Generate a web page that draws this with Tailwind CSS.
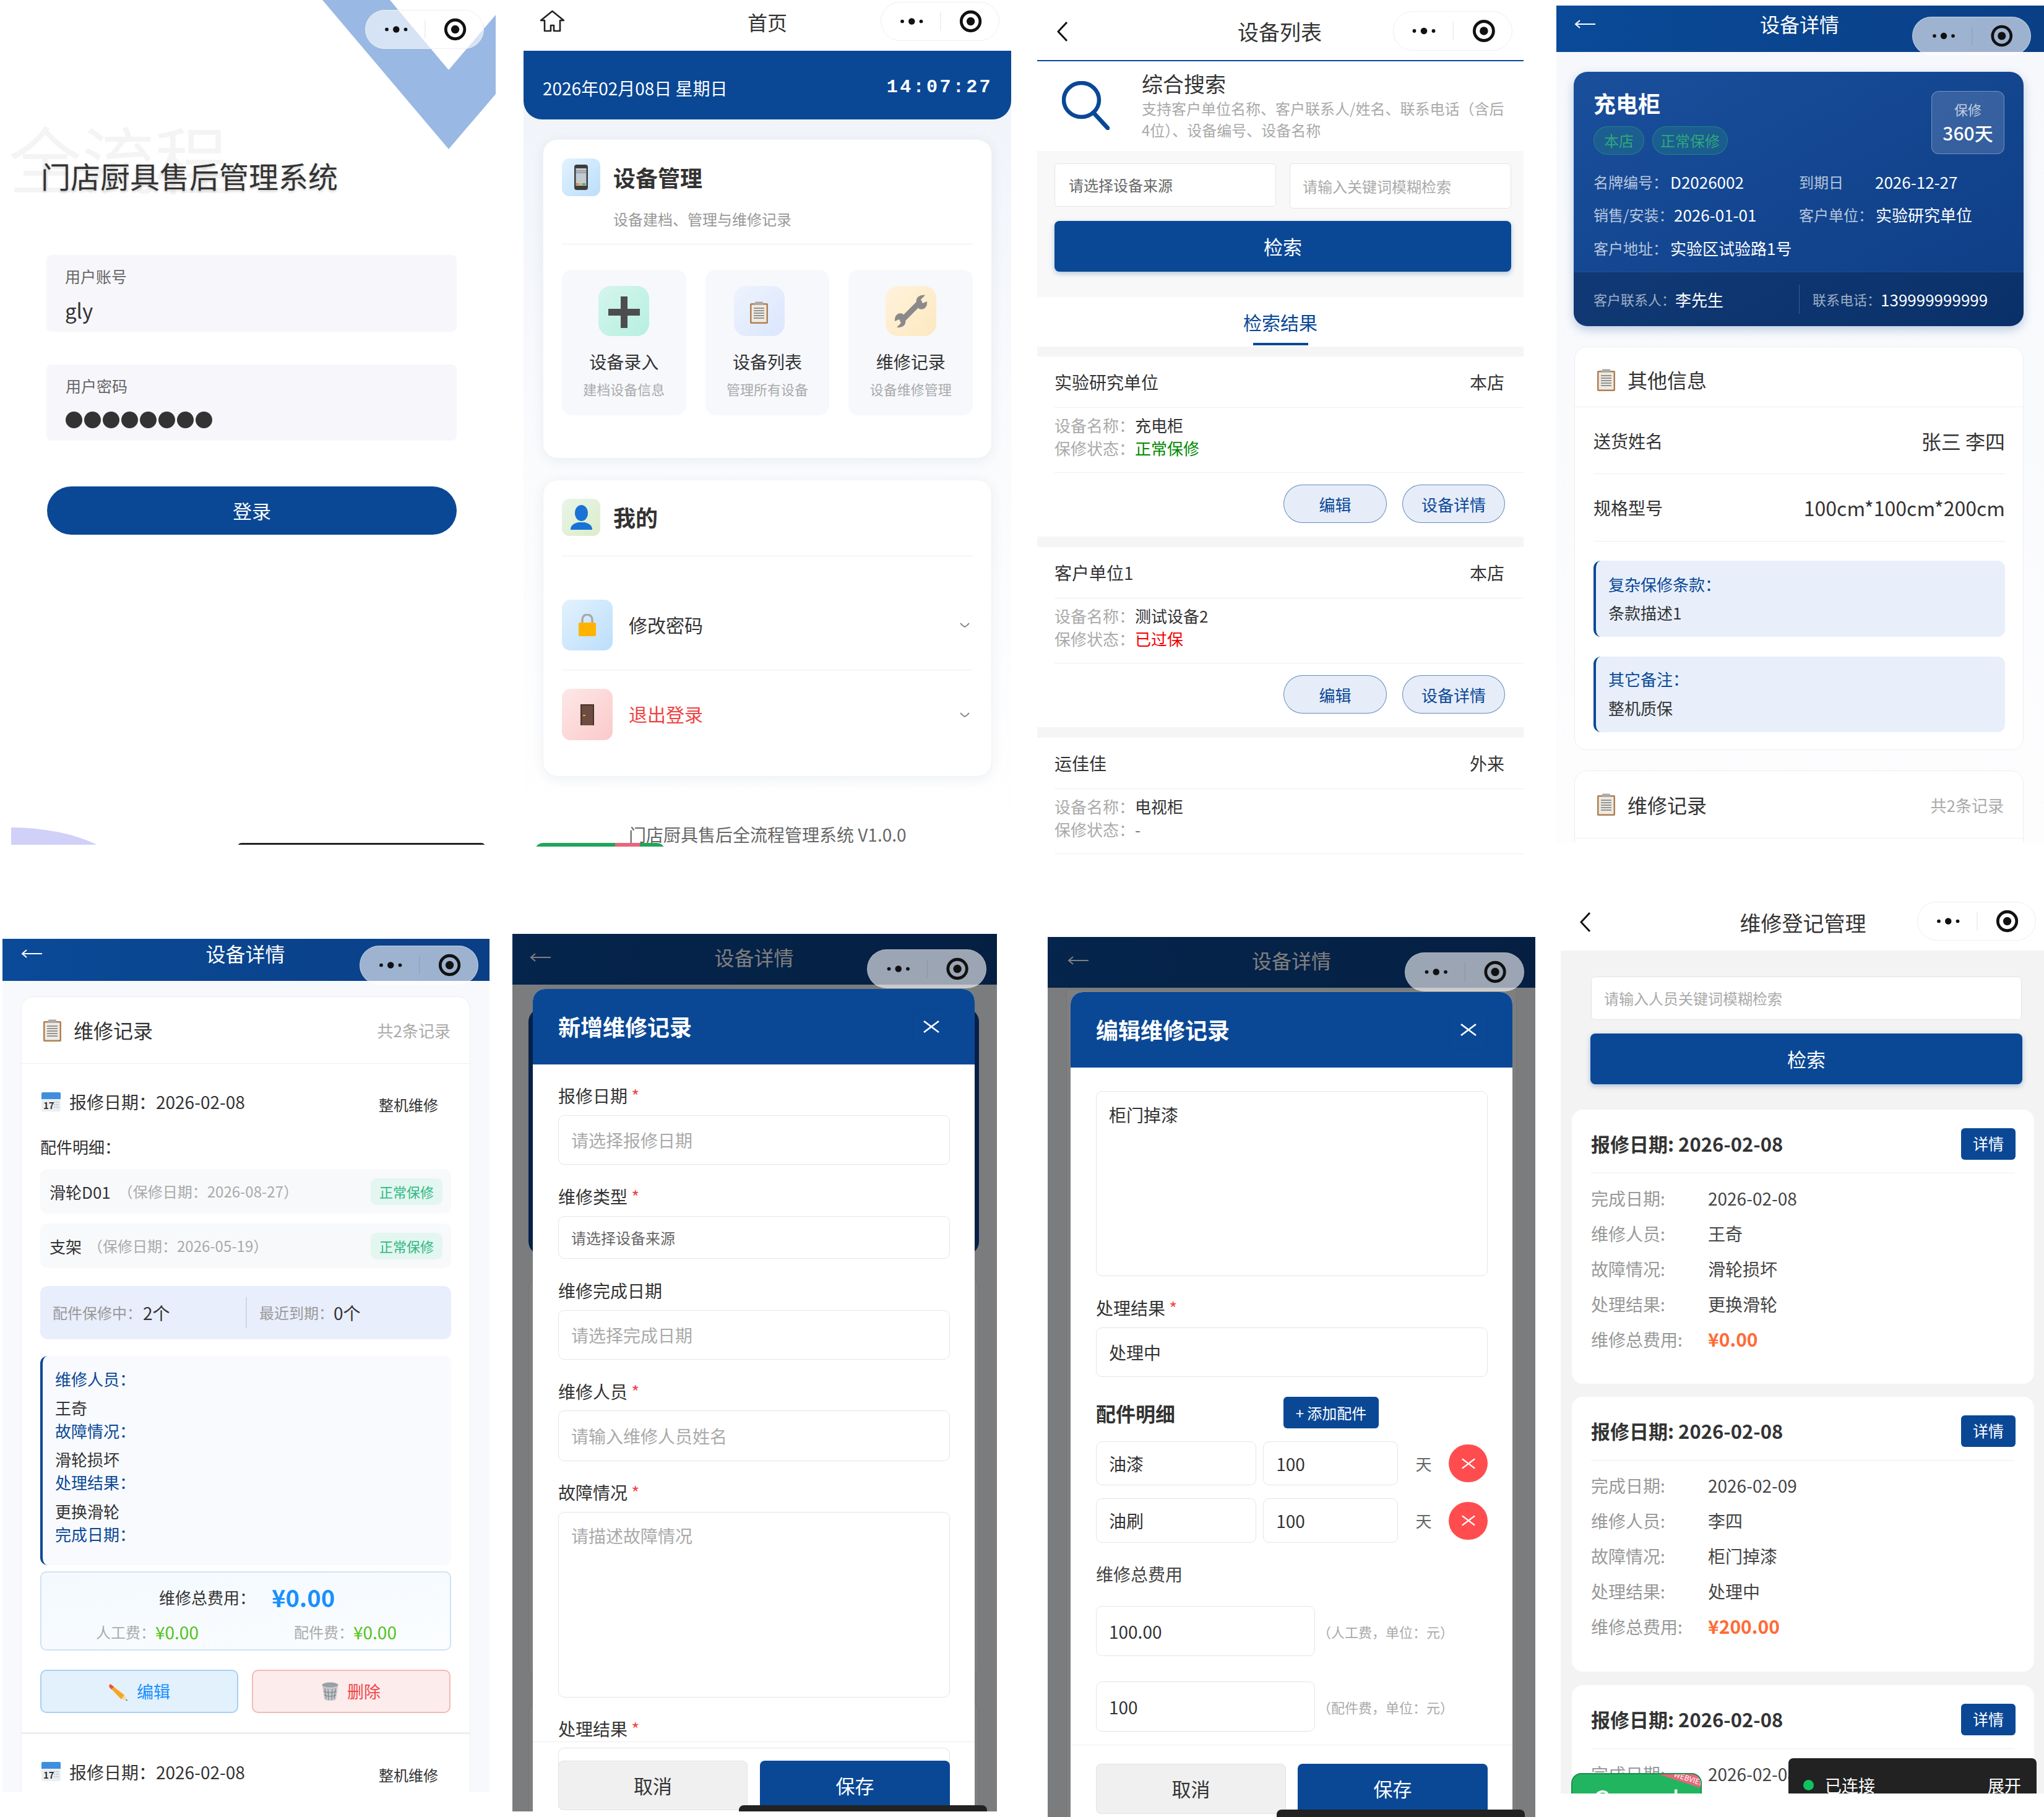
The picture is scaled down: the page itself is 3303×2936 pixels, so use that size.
<!DOCTYPE html>
<html lang="zh">
<head>
<meta charset="utf-8">
<script src="https://cdn.jsdelivr.net/npm/@tailwindcss/browser@4"></script>
</head>
<body class="relative w-[3303px] h-[2936px] overflow-hidden bg-white text-[#333] [font-family:'Noto_Sans_CJK_SC','Noto_Sans',sans-serif]">

<svg class="absolute w-0 h-0" aria-hidden="true">
  <defs>
    <symbol id="cap" viewBox="0 0 192 64">
      <circle cx="32" cy="32" r="3" fill="#111"/><circle cx="48" cy="32" r="5.5" fill="#111"/><circle cx="64" cy="32" r="3" fill="#111"/>
      <line x1="97" y1="16" x2="97" y2="48" stroke="#000" stroke-opacity=".08" stroke-width="1.5"/>
      <circle cx="148" cy="32" r="16" fill="none" stroke="#111" stroke-width="5"/><circle cx="148" cy="32" r="7" fill="#111"/>
    </symbol>
    <symbol id="clip" viewBox="0 0 29 36">
      <rect x="0" y="3" width="29" height="33" rx="2" fill="#b07f52"/>
      <rect x="2.5" y="5.500" width="24" height="28" fill="#eeebe3"/>
      <path d="M6 11h17M6 15h17M6 19h17M6 23h17M6 27h17" stroke="#777" stroke-width="1.3"/>
      <rect x="8" y="0.5" width="13" height="5" rx="1" fill="#a9a9a9"/>
    </symbol>
    <symbol id="cal" viewBox="0 0 31 31">
      <rect x="0" y="0" width="31" height="31" rx="2" fill="#eceff2"/>
      <path d="M0 2a2 2 0 0 1 2-2h27a2 2 0 0 1 2 2v9H0z" fill="#3f8fdc"/>
      <text x="3" y="27" font-size="15" font-weight="700" fill="#333">17</text>
      <path d="M20 16h8M20 20h8M20 24h8" stroke="#b9bdc2" stroke-width="1.6" stroke-dasharray="2 1"/>
    </symbol>
    <symbol id="back" viewBox="0 0 18 34"><path d="M16 2 2 17l14 15" fill="none" stroke="#111" stroke-width="3"/></symbol>
    <symbol id="chev" viewBox="0 0 16 10"><path d="M1 2q3 4 7 6q4-2 7-6" fill="none" stroke="#777" stroke-width="1.8"/></symbol>
    <symbol id="x" viewBox="0 0 26 26"><path d="M1 4 25 22M25 4 1 22" fill="none" stroke="#fff" stroke-width="2.800"/></symbol>
  </defs>
</svg>

<!-- 1 LOGIN -->
<section class="absolute left-[18px] top-0 w-[783px] h-[1365px] overflow-hidden bg-white">
  <svg class="absolute left-0 top-0" width="783" height="260"><polygon points="503,0 612,0 707,113 783,24 783,152 707,241" fill="#99b8e3"/></svg>
  <div class="absolute left-[-4px] top-[190px] text-[118px] leading-[128px] text-[#f4f4f4]">全流程</div>
  <div class="absolute left-[572px] top-[16px] w-[192px] h-[63px] rounded-full border border-[#eeeeee] bg-white/60"><svg class="w-full h-full"><use href="#cap"/></svg></div>
  <div class="relative pt-[258px]">
    <h1 class="ml-[48px] text-[48px] leading-[50px] font-normal text-[#333] [text-shadow:0_2px_4px_rgba(0,0,0,0.2)]">门店厨具售后管理系统</h1>
    <div class="ml-[57px] mt-[104px] w-[663px] h-[124px] rounded-[8px] bg-[#f7f7fb] pl-[30px] pt-[17px]">
      <div class="text-[25px] leading-[34px] text-[#666]">用户账号</div>
      <div class="mt-[16px] text-[33px] leading-[44px] text-[#333]">gly</div>
    </div>
    <div class="ml-[57px] mt-[53px] w-[663px] h-[123px] rounded-[8px] bg-[#f7f7fb] pl-[31px] pt-[17px]">
      <div class="text-[25px] leading-[34px] text-[#666]">用户密码</div>
      <div class="mt-[25px] flex gap-[3px]">
        <span class="w-[27px] h-[27px] rounded-full bg-[#333]"></span><span class="w-[27px] h-[27px] rounded-full bg-[#333]"></span><span class="w-[27px] h-[27px] rounded-full bg-[#333]"></span><span class="w-[27px] h-[27px] rounded-full bg-[#333]"></span><span class="w-[27px] h-[27px] rounded-full bg-[#333]"></span><span class="w-[27px] h-[27px] rounded-full bg-[#333]"></span><span class="w-[27px] h-[27px] rounded-full bg-[#333]"></span><span class="w-[27px] h-[27px] rounded-full bg-[#333]"></span>
      </div>
    </div>
    <button class="block ml-[58px] mt-[74px] w-[662px] h-[78px] rounded-full bg-[#0a4896] text-white text-[31px]">登录</button>
  </div>
  <div class="absolute left-[-200px] top-[1337px] w-[400px] h-[200px] rounded-[50%] bg-[#d0d0f8]"></div>
  <div class="absolute left-[366px] top-[1362px] w-[400px] h-[6px] rounded-t-[6px] bg-[#222]"></div>
</section>

<!-- 2 HOME -->
<section class="absolute left-[846px] top-0 w-[788px] h-[1368px] overflow-hidden bg-white">
  <div class="relative h-[82px] flex items-center justify-center pb-[13px] text-[32px]">
    首页
    <svg class="absolute left-[27px] top-[16px]" width="39" height="36" viewBox="0 0 39 36"><path d="M1 17 19.500 2 38 17h-6v17H22v-9h-5v9H7V17z" fill="none" stroke="#222" stroke-width="2.600" stroke-linejoin="round"/></svg>
  </div>
  <div class="absolute left-[577px] top-[3px] w-[192px] h-[63px] rounded-full border border-[#eeeeee] bg-white"><svg class="w-full h-full"><use href="#cap"/></svg></div>
  <div class="h-[1286px] bg-linear-to-b from-[#eff3f9] via-[#fafbfd] to-white">
    <div class="h-[111px] rounded-b-[30px] bg-[#0a4896] text-white flex items-center justify-between pl-[31px] pr-[30px] pt-[8px]">
      <span class="text-[28px]">2026年02月08日 星期日</span>
      <span class="font-bold text-[30px] tracking-[3.400px] [font-family:'Liberation_Mono',monospace]">14:07:27</span>
    </div>
    <div class="ml-[31px] mt-[32px] w-[726px] h-[516px] rounded-[24px] bg-white px-[30px] pt-[30px] shadow-[0_4px_20px_rgba(20,50,100,0.07)] border border-[#f2f3f6]">
      <div class="flex items-center gap-[21px] h-[61px]">
        <div class="w-[62px] h-[61px] rounded-[12px] bg-linear-to-br from-[#e3f2fd] to-[#bbdefb] flex items-center justify-center">
          <svg width="22" height="41" viewBox="0 0 22 41"><rect width="22" height="41" rx="4" fill="#3d3d3d"/><rect x="2.500" y="6" width="17" height="28" fill="#c3cbd2"/><path d="M3 30h4v3H3z" fill="#e57d3a"/><path d="M8 30h4v3H8z" fill="#d6b035"/><path d="M13 30h5v3h-5z" fill="#58a55c"/><path d="M3 10h16M3 13h16" stroke="#6e7780" stroke-width="1"/></svg>
        </div>
        <h2 class="text-[36px] font-bold leading-[48px] -mt-[2px]">设备管理</h2>
      </div>
      <p class="ml-[83px] mt-[20px] text-[24px] leading-[34px] text-[#999]">设备建档、管理与维修记录</p>
      <div class="mt-[23px] h-px bg-[#eeeeee]"></div>
      <div class="mt-[41px] grid grid-cols-3 gap-[31px]">
        <div class="h-[235px] rounded-[16px] bg-[#f6f8fc] flex flex-col items-center pt-[26px]">
          <div class="w-[82px] h-[81px] rounded-[20px] bg-linear-to-br from-[#d5f5ec] to-[#b5f0e0] flex items-center justify-center"><svg class="mt-[4px]" width="51" height="51" viewBox="0 0 51 51"><path d="M20 0h11v20h20v11H31v20H20V31H0V20h20z" fill="#4d4d4d"/></svg></div>
          <div class="mt-[23px] text-[28px] leading-[36px]">设备录入</div>
          <div class="mt-[11px] text-[22px] leading-[30px] text-[#aaa]">建档设备信息</div>
        </div>
        <div class="h-[235px] rounded-[16px] bg-[#f6f8fc] flex flex-col items-center pt-[26px]">
          <div class="mr-[26px] w-[82px] h-[81px] rounded-[20px] bg-linear-to-br from-[#eef3fd] to-[#dbe6fd] flex items-center justify-center"><svg class="mt-[4px]" width="29" height="36"><use href="#clip"/></svg></div>
          <div class="mt-[23px] text-[28px] leading-[36px]">设备列表</div>
          <div class="mt-[11px] text-[22px] leading-[30px] text-[#aaa]">管理所有设备</div>
        </div>
        <div class="h-[235px] rounded-[16px] bg-[#f6f8fc] flex flex-col items-center pt-[26px]">
          <div class="w-[82px] h-[81px] rounded-[20px] bg-linear-to-br from-[#fff3dc] to-[#fde8c0] flex items-center justify-center"><svg width="54" height="54" viewBox="0 0 54 54"><path d="M13 41 41 13" stroke="#8a8a8a" stroke-width="9"/><path d="M36 13C34 5 41 0 50 1l-7 7 3 6 7-3c1 9-5 15-13 12z" fill="#8a8a8a"/><path d="M18 41c2 8-5 13-14 12l7-7-3-6-7 3c-1-9 5-15 13-12z" fill="#8a8a8a"/></svg></div>
          <div class="mt-[23px] text-[28px] leading-[36px]">维修记录</div>
          <div class="mt-[11px] text-[22px] leading-[30px] text-[#aaa]">设备维修管理</div>
        </div>
      </div>
    </div>
    <div class="ml-[31px] mt-[34px] w-[726px] h-[480px] rounded-[24px] bg-white px-[30px] pt-[30px] shadow-[0_4px_20px_rgba(20,50,100,0.07)] border border-[#f2f3f6]">
      <div class="flex items-center gap-[21px] h-[60px]">
        <div class="w-[62px] h-[60px] rounded-[12px] bg-linear-to-br from-[#e8f5e9] to-[#dcedc8] flex items-center justify-center"><svg width="35" height="40" viewBox="0 0 35 40"><ellipse cx="17.500" cy="13" rx="10.500" ry="13" fill="#1a73d4"/><path d="M0 40c0-8 6-10 12-12h11c6 2 12 4 12 12z" fill="#1a73d4"/></svg></div>
        <h2 class="text-[36px] font-bold leading-[48px] -mt-[2px]">我的</h2>
      </div>
      <div class="mt-[32px] h-px bg-[#eeeeee]"></div>
      <div class="mt-[70px] h-[82px] flex items-center">
        <div class="w-[82px] h-[82px] rounded-[14px] bg-linear-to-br from-[#e3f2fd] to-[#bbdefb] flex items-center justify-center"><svg width="28" height="36" viewBox="0 0 28 36"><path d="M6 16V9a8 8 0 0 1 16 0v7" fill="none" stroke="#a9a9a9" stroke-width="3.500"/><rect y="14" width="28" height="22" rx="2" fill="#ffb300"/></svg></div>
        <span class="ml-[26px] text-[30px] flex-1 -mt-[2px]">修改密码</span>
        <svg class="mr-[5px]" width="16" height="10"><use href="#chev"/></svg>
      </div>
      <div class="mt-[31px] h-px bg-[#eeeeee]"></div>
      <div class="mt-[30px] h-[83px] flex items-center">
        <div class="w-[82px] h-[83px] rounded-[14px] bg-linear-to-br from-[#fde8e8] to-[#fbc9c9] flex items-center justify-center"><svg width="22" height="34" viewBox="0 0 22 34"><rect width="22" height="34" fill="#4a3128"/><rect x="2" y="2" width="18" height="32" fill="#6d4c41"/><rect x="4" y="17" width="4" height="2" fill="#e0b040"/></svg></div>
        <span class="ml-[26px] text-[30px] text-[#ef4444] flex-1 -mt-[2px]">退出登录</span>
        <svg class="mr-[5px]" width="16" height="10"><use href="#chev"/></svg>
      </div>
    </div>
    <p class="ml-[170px] mt-[75px] text-[28px] leading-[36px] text-[#666]">门店厨具售后全流程管理系统 V1.0.0</p>
  </div>
  <div class="absolute left-[18px] top-[1362px] w-[211px] h-[20px] rounded-t-[14px] bg-[#22a55a] overflow-hidden"><div class="ml-[130px] w-[40px] h-full bg-[#e8657a]"></div></div>
</section>

<!-- 3 LIST -->
<section class="absolute left-[1676px] top-0 w-[786px] h-[1380px] overflow-hidden bg-white">
  <div class="relative h-[99px] border-b-2 border-[#0a4896] flex items-center justify-center pt-[4px] pr-[2px] text-[34px]">
    设备列表
    <svg class="absolute left-[32px] top-[34px]" width="18" height="34"><use href="#back"/></svg>
  </div>
  <div class="absolute left-[575px] top-[18px] w-[193px] h-[64px] rounded-full border border-[#eeeeee] bg-white"><svg class="w-full h-full"><use href="#cap"/></svg></div>
  <div class="h-[145px] flex">
    <svg class="ml-[40px] mt-[32px]" width="77" height="79" viewBox="0 0 77 79"><ellipse cx="31.500" cy="30.500" rx="28.500" ry="27.500" fill="none" stroke="#0a4896" stroke-width="6.500"/><path d="M51 51 74 76" stroke="#0a4896" stroke-width="7" stroke-linecap="round"/></svg>
    <div class="ml-[52px] pt-[16px]">
      <div class="text-[34px] leading-[40px]">综合搜索</div>
      <p class="mt-[2px] w-[600px] text-[24px] leading-[35px] text-[#aaa]">支持客户单位名称、客户联系人/姓名、联系电话（含后<br>4位）、设备编号、设备名称</p>
    </div>
  </div>
  <div class="h-[236px] bg-[#f8f8f8] pl-[28px] pr-[20px] pt-[20px]">
    <div class="flex gap-[22px] items-start">
      <div class="w-[358px] h-[70px] rounded-[6px] border border-[#e5e5e5] bg-white flex items-center pl-[22px] text-[24px] text-[#666]">请选择设备来源</div>
      <div class="w-[358px] h-[73px] rounded-[6px] border border-[#e5e5e5] bg-white flex items-center pl-[20px] text-[24px] text-[#aaa]">请输入关键词模糊检索</div>
    </div>
    <button class="block mt-[20px] w-[738px] h-[82px] rounded-[8px] bg-[#0a4896] text-white text-[31px] shadow-[0_3px_8px_rgba(10,72,150,0.3)]">检索</button>
  </div>
  <div class="h-[80px] flex flex-col items-center pt-[20px]">
    <div class="text-[30px] leading-[40px] text-[#0a4896]">检索结果</div>
    <div class="mt-[14px] w-[89px] h-[4px] bg-[#0a4896]"></div>
  </div>
  <div class="h-[16px] bg-[#f5f5f5]"></div>

  <div class="ml-[28px] h-[83px] border-b border-[#eeeeee] flex items-center justify-between pr-[31px] text-[28px]"><span>实验研究单位</span><span>本店</span></div>
  <div class="ml-[28px] h-[105px] border-b border-[#eeeeee] pt-[9px] text-[26px] leading-[37px]">
    <div><span class="text-[#aaa]">设备名称：</span>充电柜</div>
    <div><span class="text-[#aaa]">保修状态：</span><span class="text-[#008a00]">正常保修</span></div>
  </div>
  <div class="h-[103px] flex justify-end gap-[25px] pr-[30px] pt-[19px]">
    <button class="w-[167px] h-[62px] rounded-full border border-[#0a4896]/60 bg-[#e6edf8] text-[#0a4896] text-[26px]">编辑</button>
    <button class="w-[166px] h-[62px] rounded-full border border-[#0a4896]/60 bg-[#e6edf8] text-[#0a4896] text-[26px]">设备详情</button>
  </div>
  <div class="h-[17px] bg-[#f5f5f5]"></div>

  <div class="ml-[28px] h-[83px] border-b border-[#eeeeee] flex items-center justify-between pr-[31px] text-[28px]"><span>客户单位1</span><span>本店</span></div>
  <div class="ml-[28px] h-[105px] border-b border-[#eeeeee] pt-[9px] text-[26px] leading-[37px]">
    <div><span class="text-[#aaa]">设备名称：</span>测试设备2</div>
    <div><span class="text-[#aaa]">保修状态：</span><span class="text-[#f00000]">已过保</span></div>
  </div>
  <div class="h-[103px] flex justify-end gap-[25px] pr-[30px] pt-[19px]">
    <button class="w-[167px] h-[62px] rounded-full border border-[#0a4896]/60 bg-[#e6edf8] text-[#0a4896] text-[26px]">编辑</button>
    <button class="w-[166px] h-[62px] rounded-full border border-[#0a4896]/60 bg-[#e6edf8] text-[#0a4896] text-[26px]">设备详情</button>
  </div>
  <div class="h-[17px] bg-[#f5f5f5]"></div>

  <div class="ml-[28px] h-[83px] border-b border-[#eeeeee] flex items-center justify-between pr-[31px] text-[28px]"><span>运佳佳</span><span>外来</span></div>
  <div class="ml-[28px] h-[105px] border-b border-[#eeeeee] pt-[9px] text-[26px] leading-[37px]">
    <div><span class="text-[#aaa]">设备名称：</span>电视柜</div>
    <div><span class="text-[#aaa]">保修状态：</span><span class="text-[#777]">-</span></div>
  </div>
</section>

<!-- 4 DETAIL -->
<section class="absolute left-[2515px] top-[9px] w-[788px] h-[1353px] overflow-hidden bg-white">
  <div class="relative h-[75px] bg-linear-to-r from-[#0a4a98] to-[#0a3f86] text-white flex items-start justify-center pr-[2px] text-[32px] leading-[58px]">
    设备详情
    <svg class="absolute left-[29px] top-[22px]" width="34" height="16" viewBox="0 0 34 16"><path d="M34 8H2M9 2 2 8l7 6" fill="none" stroke="#fff" stroke-width="2"/></svg>
  </div>
  <div class="absolute left-[575px] top-[18px] w-[192px] h-[62px] rounded-full border border-white/40 bg-white/60"><svg class="w-full h-full"><use href="#cap"/></svg></div>
  <div class="h-[1278px] bg-linear-to-b from-[#f6f8fb] to-[#fdfdfe] pt-[32px]">
    <div class="ml-[28px] w-[727px] h-[411px] rounded-[22px] overflow-hidden bg-linear-to-br from-[#1a4f9c] to-[#0d3d84] shadow-[0_6px_16px_rgba(10,72,150,0.25)] text-white">
      <div class="h-[134px] pt-[25px] pl-[32px] pr-[31px] flex justify-between items-start">
        <div>
          <div class="text-[36px] font-bold leading-[50px]">充电柜</div>
          <div class="mt-[13px] flex gap-[13px]">
            <span class="w-[82px] h-[46px] rounded-full border border-[#2ea87a]/50 bg-[#2ea87a]/20 text-[#2ea87a] text-[24px] flex items-center justify-center">本店</span>
            <span class="w-[122px] h-[46px] rounded-full border border-[#2ea87a]/50 bg-[#2ea87a]/20 text-[#2ea87a] text-[24px] flex items-center justify-center">正常保修</span>
          </div>
        </div>
        <div class="mt-[6px] w-[118px] h-[102px] rounded-[12px] border border-white/30 bg-white/15 flex flex-col items-center pt-[9px]">
          <div class="text-[22px] leading-[38px] text-white/70">保修</div>
          <div class="text-[30px] leading-[38px] font-medium">360天</div>
        </div>
      </div>
      <div class="mt-[24px] pl-[32px] grid grid-cols-[332px_1fr] text-[26px] leading-[40px] whitespace-nowrap">
        <div class="h-[53px] flex"><span class="w-[124px] shrink-0 text-[24px] text-white/70">名牌编号：</span>D2026002</div>
        <div class="h-[53px] flex"><span class="w-[123px] shrink-0 text-[24px] text-white/70">到期日</span>2026-12-27</div>
        <div class="h-[54px] flex"><span class="w-[130px] shrink-0 text-[24px] text-white/70">销售/安装：</span>2026-01-01</div>
        <div class="h-[54px] flex"><span class="w-[124px] shrink-0 text-[24px] text-white/70">客户单位：</span>实验研究单位</div>
        <div class="h-[40px] flex"><span class="w-[124px] shrink-0 text-[24px] text-white/70">客户地址：</span>实验区试验路1号</div>
      </div>
      <div class="mt-[18px] h-[88px] border-t border-white/10 bg-black/20 flex items-center pl-[32px]">
        <div class="w-[332px] flex items-center text-[26px]"><span class="text-[22px] text-white/60">客户联系人：</span>李先生</div>
        <div class="w-px h-[47px] bg-white/20"></div>
        <div class="pl-[21px] flex items-center text-[26px]"><span class="text-[22px] text-white/60">联系电话：</span>139999999999</div>
      </div>
    </div>
    <div class="ml-[29px] mt-[33px] w-[726px] h-[652px] rounded-[20px] border border-[#eeeeee] bg-white">
      <div class="h-[97px] pt-[10px] border-b border-[#eeeeee] flex items-center pl-[36px] text-[32px]">
        <svg width="29" height="36"><use href="#clip"/></svg><span class="ml-[20px] -mt-[2px]">其他信息</span>
      </div>
      <div class="ml-[30px] mr-[29px]">
        <div class="h-[108px] border-b border-[#eeeeee] flex items-center justify-between"><span class="text-[28px]">送货姓名</span><span class="text-[32px]">张三 李四</span></div>
        <div class="h-[109px] border-b border-[#eeeeee] flex items-center justify-between"><span class="text-[28px]">规格型号</span><span class="text-[32px]">100cm*100cm*200cm</span></div>
        <div class="mt-[31px] h-[123px] rounded-[12px] border-l-4 border-[#0a4896] bg-[#e8effb] pl-[20px] pt-[20px] text-[26px] leading-[36px]">
          <div class="text-[#0a4896]">复杂保修条款：</div>
          <div class="mt-[10px]">条款描述1</div>
        </div>
        <div class="mt-[32px] h-[122px] rounded-[12px] border-l-4 border-[#0a4896] bg-[#e8effb] pl-[20px] pt-[18px] text-[26px] leading-[36px]">
          <div class="text-[#0a4896]">其它备注：</div>
          <div class="mt-[11px]">整机质保</div>
        </div>
      </div>
    </div>
    <div class="ml-[29px] mt-[33px] w-[726px] h-[200px] rounded-t-[20px] border border-[#eeeeee] bg-white">
      <div class="h-[109px] border-b border-[#eeeeee] flex items-center pl-[36px] pr-[31px] text-[32px]">
        <svg width="29" height="36"><use href="#clip"/></svg><span class="ml-[20px] flex-1">维修记录</span><span class="text-[26px] text-[#aaa]">共2条记录</span>
      </div>
    </div>
  </div>
</section>

<!-- 5 DETAIL RECORDS -->
<section class="absolute left-[4px] top-[1517px] w-[787px] h-[1379px] overflow-hidden bg-white">
  <div class="relative h-[68px] bg-linear-to-r from-[#0a4a98] to-[#0a3f86] text-white flex items-start justify-center pr-[2px] text-[32px] leading-[46px]">
    设备详情
    <svg class="absolute left-[30px] top-[16px]" width="34" height="16" viewBox="0 0 34 16"><path d="M34 8H2M9 2 2 8l7 6" fill="none" stroke="#fff" stroke-width="2"/></svg>
  </div>
  <div class="absolute left-[577px] top-[11px] w-[192px] h-[63px] rounded-full border border-white/40 bg-white/60"><svg class="w-full h-full"><use href="#cap"/></svg></div>
  <div class="h-[1311px] bg-[#f7f9fc] pt-[25px]">
    <div class="ml-[30px] w-[726px] h-[1400px] rounded-t-[20px] border border-[#eeeeee] bg-white">
      <div class="h-[108px] border-b border-[#eeeeee] flex items-center pl-[35px] pr-[31px] text-[32px]">
        <svg width="29" height="36"><use href="#clip"/></svg><span class="ml-[20px] flex-1 -mt-[2px]">维修记录</span><span class="text-[26px] text-[#aaa]">共2条记录</span>
      </div>
      <div class="mx-[30px]">
        <div class="pt-[43px] h-[79px] flex items-center">
          <svg class="ml-[2px]" width="31" height="31"><use href="#cal"/></svg>
          <span class="ml-[14px] text-[28px] flex-1">报修日期：2026-02-08</span>
          <span class="mr-[21px] mt-[10px] text-[24px]">整机维修</span>
        </div>
        <div class="mt-[37px] text-[26px] leading-[36px]">配件明细：</div>
        <div class="mt-[18px] h-[72px] rounded-[12px] bg-[#f8f9fb] flex items-center pl-[15px] pr-[14px]">
          <span class="text-[26px]">滑轮D01</span><span class="ml-[12px] text-[24px] text-[#aaa] flex-1">（保修日期：2026-08-27）</span>
          <span class="w-[116px] h-[43px] rounded-[10px] bg-[#e3f6ef] text-[#2eb886] text-[22px] flex items-center justify-center">正常保修</span>
        </div>
        <div class="mt-[16px] h-[72px] rounded-[12px] bg-[#f8f9fb] flex items-center pl-[15px] pr-[14px]">
          <span class="text-[26px]">支架</span><span class="ml-[10px] text-[24px] text-[#aaa] flex-1">（保修日期：2026-05-19）</span>
          <span class="w-[116px] h-[43px] rounded-[10px] bg-[#e3f6ef] text-[#2eb886] text-[22px] flex items-center justify-center">正常保修</span>
        </div>
        <div class="mt-[29px] h-[86px] rounded-[12px] bg-[#e8eefb] flex items-center">
          <div class="w-[332px] pl-[20px] flex items-center text-[28px]"><span class="text-[24px] text-[#999] mr-[2px]">配件保修中：</span>2个</div>
          <div class="w-[2px] h-[50px] bg-[#cfd6e4]"></div>
          <div class="pl-[20px] flex items-center text-[28px]"><span class="text-[24px] text-[#999] mr-[0px]">最近到期：</span>0个</div>
        </div>
        <div class="mt-[27px] h-[338px] rounded-[12px] border-l-4 border-[#0a4896] bg-[#f8fafd] pl-[20px] pt-[19px] text-[26px] leading-[36px]">
          <div class="text-[#0a4896]">维修人员：</div>
          <div class="mt-[11px]">王奇</div>
          <div class="mt-[1px] text-[#0a4896]">故障情况：</div>
          <div class="mt-[10px]">滑轮损坏</div>
          <div class="mt-[1px] text-[#0a4896]">处理结果：</div>
          <div class="mt-[11px]">更换滑轮</div>
          <div class="mt-[1px] text-[#0a4896]">完成日期：</div>
        </div>
        <div class="mt-[10px] h-[128px] rounded-[10px] border-2 border-[#cfe2f7] bg-linear-to-br from-[#f3f9fe] to-[#fbfdff]">
          <div class="h-[78px] flex items-center pl-[190px] text-[26px]"><span>维修总费用：</span><span class="ml-[26px] text-[#1890ff] text-[38px] font-bold">¥0.00</span></div>
          <div class="-mt-[3px] flex pl-[88px] text-[28px]">
            <div class="w-[320px] flex items-center"><span class="text-[24px] text-[#aaa]">人工费：</span><span class="text-[#52c41a]">¥0.00</span></div>
            <div class="flex items-center"><span class="text-[24px] text-[#aaa]">配件费：</span><span class="text-[#52c41a]">¥0.00</span></div>
          </div>
        </div>
        <div class="mt-[31px] flex gap-[22px]">
          <button class="w-[320px] h-[70px] rounded-[10px] border-2 border-[#a8d0f5] bg-[#e3f1fd] text-[#1890ff] text-[27px] flex items-center justify-center gap-[14px]">
            <svg width="32" height="32" viewBox="0 0 32 32"><path d="M3 4 26 22l-5 7L1 8z" fill="#f5a623"/><path d="M3 4 9 8.500 5 13 1 8z" fill="#e8503a"/><path d="M26 22l5 9-9-2z" fill="#f4d9a8"/><path d="M30 29l1 2-3-.6z" fill="#333"/></svg>编辑
          </button>
          <button class="w-[321px] h-[70px] rounded-[10px] border-2 border-[#f5b8b8] bg-[#fdecec] text-[#f04848] text-[27px] flex items-center justify-center gap-[14px]">
            <svg width="27" height="30" viewBox="0 0 27 30"><ellipse cx="13.500" cy="5" rx="13" ry="4.500" fill="#9aa0a6"/><path d="M1 6l3 21q.5 3 9.500 3t9.500-3l3-21q-13 5-25 0z" fill="#c4c8cc"/><path d="M5 10l2 17M10 11l1 18M17 11l-1 18M22 10l-2 17M3 15q10 4 21 0M4 21q10 4 19 0" stroke="#72787e" stroke-width="1" fill="none"/></svg>删除
          </button>
        </div>
        <div class="mt-[31px] -mx-[30px] h-[3px] bg-[#eeeeee]"></div>
        <div class="pt-[42px] h-[79px] flex items-center">
          <svg class="ml-[2px]" width="31" height="31"><use href="#cal"/></svg>
          <span class="ml-[14px] text-[28px] flex-1">报修日期：2026-02-08</span>
          <span class="mr-[21px] mt-[10px] text-[24px]">整机维修</span>
        </div>
      </div>
    </div>
  </div>
</section>

<!-- 6 NEW RECORD MODAL -->
<section class="absolute left-[828px] top-[1509px] w-[783px] h-[1418px] overflow-hidden bg-white">
  <div class="relative h-[82px] bg-linear-to-r from-[#0a4a98] to-[#0a3f86] text-white flex items-center justify-center text-[32px] pb-[9px] pr-[2px]">
    设备详情
    <svg class="absolute left-[28px] top-[30px]" width="34" height="16" viewBox="0 0 34 16"><path d="M34 8H2M9 2 2 8l7 6" fill="none" stroke="#fff" stroke-width="2"/></svg>
  </div>
  <div class="h-[1336px] bg-[#f6f8fb] pt-[38px]">
    <div class="ml-[26px] w-[728px] h-[399px] rounded-[22px] bg-[#0d4090]"></div>
    <div class="ml-[26px] mt-[33px] w-[728px] h-[652px] rounded-[20px] border border-[#e8e8e8] bg-white"></div>
    <div class="ml-[26px] mt-[33px] w-[728px] h-[300px] rounded-t-[20px] border border-[#e8e8e8] bg-white"></div>
  </div>
  <div class="absolute inset-0 bg-black/50"></div>
  <div class="absolute left-[33px] top-[89px] w-[714px] h-[1329px] rounded-t-[20px] bg-white overflow-hidden">
    <div class="h-[122px] bg-[#0a4896] flex items-center justify-between pl-[41px] pr-[40px]">
      <h3 class="text-[36px] font-bold text-white -mt-[2px]">新增维修记录</h3>
      <div class="w-[61px] h-[60px] rounded-[8px] border border-black/5 flex items-center justify-center"><svg width="26" height="26"><use href="#x"/></svg></div>
    </div>
    <div class="pl-[41px] pr-[40px] pt-[32px] text-[28px] leading-[36px]">
      <div>报修日期 <span class="text-[#f04848]">*</span></div>
      <div class="mt-[14px] h-[80px] rounded-[10px] border border-[#e5e5e5] flex items-center pl-[20px] text-[#aaa]">请选择报修日期</div>
      <div class="mt-[33px]">维修类型 <span class="text-[#f04848]">*</span></div>
      <div class="mt-[14px] h-[69px] rounded-[10px] border border-[#e5e5e5] flex items-center pl-[20px] text-[24px] text-[#666]">请选择设备来源</div>
      <div class="mt-[33px]">维修完成日期</div>
      <div class="mt-[14px] h-[80px] rounded-[10px] border border-[#e5e5e5] flex items-center pl-[20px] text-[#aaa]">请选择完成日期</div>
      <div class="mt-[33px]">维修人员 <span class="text-[#f04848]">*</span></div>
      <div class="mt-[13px] h-[82px] rounded-[10px] border border-[#e5e5e5] flex items-center pl-[20px] text-[#aaa]">请输入维修人员姓名</div>
      <div class="mt-[32px]">故障情况 <span class="text-[#f04848]">*</span></div>
      <div class="mt-[14px] h-[300px] rounded-[10px] border border-[#e5e5e5] pl-[20px] pt-[19px] text-[#aaa]">请描述故障情况</div>
      <div class="mt-[32px]">处理结果 <span class="text-[#f04848]">*</span></div>
      <div class="mt-[13px] h-[40px] rounded-t-[10px] border border-b-0 border-[#e5e5e5]"></div>
    </div>
    <div class="absolute left-0 top-[1216px] w-full border-t border-[#eeeeee] pl-[41px] pt-[30px] flex gap-[20px]">
      <button class="w-[306px] h-[80px] rounded-[8px] border border-[#e3e3e3] bg-[#f0f0f0] text-[31px] text-[#333]">取消</button>
      <button class="w-[307px] h-[80px] rounded-[8px] bg-[#0a4896] text-[31px] text-white">保存</button>
    </div>
  </div>
  <div class="absolute left-[573px] top-[25px] w-[193px] h-[63px] rounded-full border border-white/20 bg-white/60"><svg class="w-full h-full"><use href="#cap"/></svg></div>
  <div class="absolute left-[366px] top-[1408px] w-[401px] h-[10px] rounded-t-[8px] bg-[#222]"></div>
</section>

<!-- 7 EDIT RECORD MODAL -->
<section class="absolute left-[1693px] top-[1514px] w-[788px] h-[1422px] overflow-hidden bg-white">
  <div class="relative h-[82px] bg-linear-to-r from-[#0a4a98] to-[#0a3f86] text-white flex items-center justify-center text-[32px] pb-[9px]">
    设备详情
    <svg class="absolute left-[32px] top-[30px]" width="34" height="16" viewBox="0 0 34 16"><path d="M34 8H2M9 2 2 8l7 6" fill="none" stroke="#fff" stroke-width="2"/></svg>
  </div>
  <div class="h-[1340px] bg-[#f6f8fb] pt-[2px]">
    <div class="ml-[30px] w-[728px] h-[1500px] border border-[#e8e8e8] bg-white"></div>
  </div>
  <div class="absolute inset-0 bg-black/50"></div>
  <div class="absolute left-[37px] top-[89px] w-[714px] h-[1333px] rounded-t-[20px] bg-white overflow-hidden">
    <div class="h-[122px] bg-[#0a4896] flex items-center justify-between pl-[41px] pr-[40px]">
      <h3 class="text-[36px] font-bold text-white -mt-[2px]">编辑维修记录</h3>
      <div class="w-[62px] h-[62px] rounded-[8px] border border-black/5 flex items-center justify-center"><svg width="26" height="26"><use href="#x"/></svg></div>
    </div>
    <div class="pl-[41px] pr-[40px] pt-[38px] text-[28px] leading-[36px]">
      <div class="h-[299px] rounded-[10px] border border-[#e5e5e5] pl-[20px] pt-[19px]">柜门掉漆</div>
      <div class="mt-[33px]">处理结果 <span class="text-[#f04848]">*</span></div>
      <div class="mt-[14px] h-[80px] rounded-[10px] border border-[#e5e5e5] flex items-center pl-[20px]">处理中</div>
      <div class="mt-[32px] h-[51px] flex items-center">
        <span class="w-[303px] text-[32px] font-bold">配件明细</span>
        <button class="w-[154px] h-[51px] rounded-[6px] bg-[#0a4896] text-white text-[24px]">+ 添加配件</button>
      </div>
      <div class="mt-[21px] h-[71px] flex items-center">
        <div class="w-[260px] h-[71px] rounded-[10px] border border-[#e5e5e5] flex items-center pl-[20px]">油漆</div>
        <div class="ml-[11px] w-[219px] h-[71px] rounded-[10px] border border-[#e5e5e5] flex items-center pl-[20px]">100</div>
        <span class="ml-[28px] w-[54px] text-[26px] text-[#666]">天</span>
        <div class="w-[63px] h-[61px] rounded-full bg-[#ff4d4f] flex items-center justify-center"><svg width="22" height="22"><use href="#x"/></svg></div>
      </div>
      <div class="mt-[21px] h-[72px] flex items-center">
        <div class="w-[260px] h-[72px] rounded-[10px] border border-[#e5e5e5] flex items-center pl-[20px]">油刷</div>
        <div class="ml-[11px] w-[219px] h-[72px] rounded-[10px] border border-[#e5e5e5] flex items-center pl-[20px]">100</div>
        <span class="ml-[28px] w-[54px] text-[26px] text-[#666]">天</span>
        <div class="w-[63px] h-[61px] rounded-full bg-[#ff4d4f] flex items-center justify-center"><svg width="22" height="22"><use href="#x"/></svg></div>
      </div>
      <div class="mt-[32px] text-[#444]">维修总费用</div>
      <div class="mt-[34px] h-[81px] flex items-center">
        <div class="w-[354px] h-[81px] rounded-[10px] border border-[#e5e5e5] flex items-center pl-[20px]">100.00</div>
        <span class="ml-[4px] text-[22px] text-[#aaa]">（人工费，单位：元）</span>
      </div>
      <div class="mt-[41px] h-[81px] flex items-center">
        <div class="w-[354px] h-[81px] rounded-[10px] border border-[#e5e5e5] flex items-center pl-[20px]">100</div>
        <span class="ml-[4px] text-[22px] text-[#aaa]">（配件费，单位：元）</span>
      </div>
    </div>
    <div class="absolute left-0 top-[1216px] w-full border-t border-[#eeeeee] pl-[41px] pt-[30px] flex gap-[19px]">
      <button class="w-[307px] h-[81px] rounded-[8px] border border-[#e3e3e3] bg-[#f0f0f0] text-[31px] text-[#333]">取消</button>
      <button class="w-[307px] h-[81px] rounded-[8px] bg-[#0a4896] text-[31px] text-white">保存</button>
    </div>
  </div>
  <div class="absolute left-[577px] top-[25px] w-[193px] h-[63px] rounded-full border border-white/20 bg-white/60"><svg class="w-full h-full"><use href="#cap"/></svg></div>
  <div class="absolute left-[370px] top-[1410px] w-[401px] h-[12px] rounded-t-[8px] bg-[#222]"></div>
</section>

<!-- 8 REPAIR LIST -->
<section class="absolute left-[2522px] top-[1440px] w-[781px] h-[1458px] overflow-hidden bg-white">
  <div class="relative h-[96px] flex items-center justify-center pt-[4px] pl-[2px] text-[34px]">
    维修登记管理
    <svg class="absolute left-[31px] top-[33px]" width="18" height="34"><use href="#back"/></svg>
  </div>
  <div class="absolute left-[576px] top-[17px] w-[192px] h-[63px] rounded-full border border-[#eeeeee] bg-white"><svg class="w-full h-full"><use href="#cap"/></svg></div>
  <div class="h-[1362px] bg-[#f3f3f3] pt-[42px]">
    <div class="ml-[49px] w-[696px] h-[70px] rounded-[6px] border border-[#e5e5e5] bg-white flex items-center pl-[20px] text-[24px] text-[#aaa]">请输入人员关键词模糊检索</div>
    <button class="block ml-[48px] mt-[22px] w-[698px] h-[82px] rounded-[8px] bg-[#0a4896] text-white text-[31px] shadow-[0_3px_8px_rgba(10,72,150,0.3)]">检索</button>

    <div class="ml-[18px] mt-[41px] w-[747px] h-[443px] rounded-[18px] bg-white px-[31px]">
      <div class="h-[103px] pt-[8px] border-b border-[#eeeeee] flex items-center justify-between pr-0">
        <h4 class="text-[31px] font-bold">报修日期: 2026-02-08</h4>
        <button class="w-[88px] h-[51px] rounded-[6px] bg-[#0a4896] text-white text-[25px] mr-[-1px]">详情</button>
      </div>
      <dl class="mt-[11px] text-[28px]">
        <div class="h-[57px] flex items-center"><dt class="w-[189px] text-[#999]">完成日期:</dt><dd class="text-[#444]">2026-02-08</dd></div>
        <div class="h-[57px] flex items-center"><dt class="w-[189px] text-[#999]">维修人员:</dt><dd class="text-[#444]">王奇</dd></div>
        <div class="h-[57px] flex items-center"><dt class="w-[189px] text-[#999]">故障情况:</dt><dd class="text-[#444]">滑轮损坏</dd></div>
        <div class="h-[57px] flex items-center"><dt class="w-[189px] text-[#999]">处理结果:</dt><dd class="text-[#444]">更换滑轮</dd></div>
        <div class="h-[57px] flex items-center"><dt class="w-[189px] text-[#999]">维修总费用:</dt><dd class="text-[#ff6b35] text-[30px] font-bold">¥0.00</dd></div>
      </dl>
    </div>

    <div class="ml-[18px] mt-[21px] w-[747px] h-[444px] rounded-[18px] bg-white px-[31px]">
      <div class="h-[103px] pt-[8px] border-b border-[#eeeeee] flex items-center justify-between">
        <h4 class="text-[31px] font-bold">报修日期: 2026-02-08</h4>
        <button class="w-[88px] h-[51px] rounded-[6px] bg-[#0a4896] text-white text-[25px] mr-[-1px]">详情</button>
      </div>
      <dl class="mt-[11px] text-[28px]">
        <div class="h-[57px] flex items-center"><dt class="w-[189px] text-[#999]">完成日期:</dt><dd class="text-[#444]">2026-02-09</dd></div>
        <div class="h-[57px] flex items-center"><dt class="w-[189px] text-[#999]">维修人员:</dt><dd class="text-[#444]">李四</dd></div>
        <div class="h-[57px] flex items-center"><dt class="w-[189px] text-[#999]">故障情况:</dt><dd class="text-[#444]">柜门掉漆</dd></div>
        <div class="h-[57px] flex items-center"><dt class="w-[189px] text-[#999]">处理结果:</dt><dd class="text-[#444]">处理中</dd></div>
        <div class="h-[57px] flex items-center"><dt class="w-[189px] text-[#999]">维修总费用:</dt><dd class="text-[#ff6b35] text-[30px] font-bold">¥200.00</dd></div>
      </dl>
    </div>

    <div class="ml-[18px] mt-[22px] w-[747px] h-[300px] rounded-[18px] bg-white px-[31px]">
      <div class="h-[103px] pt-[8px] border-b border-[#eeeeee] flex items-center justify-between">
        <h4 class="text-[31px] font-bold">报修日期: 2026-02-08</h4>
        <button class="w-[88px] h-[51px] rounded-[6px] bg-[#0a4896] text-white text-[25px] mr-[-1px]">详情</button>
      </div>
      <dl class="mt-[11px] text-[28px]">
        <div class="h-[57px] flex items-center"><dt class="w-[189px] text-[#999]">完成日期:</dt><dd class="text-[#444]">2026-02-08</dd></div>
      </dl>
    </div>
  </div>
  <div class="absolute left-[17px] top-[1425px] w-[211px] h-[80px] rounded-t-[16px] border-2 border-[#1a8c4c] bg-[#22b560] overflow-hidden text-white text-[44px] leading-[56px] text-center pt-[12px]">
    vConsole
    <div class="absolute left-[130px] top-[-2px] w-[120px] h-[18px] rotate-[18deg] bg-[#e8657a] text-[12px] leading-[18px] text-white text-center">WEBVIEW</div>
  </div>
  <div class="absolute left-[368px] top-[1401px] w-[401px] h-[57px] rounded-t-[8px] bg-[#222] text-white text-[27px] flex items-start pt-[20px] pl-[24px] pr-[25px] leading-[48px]">
    <span class="mt-[15px] w-[17px] h-[17px] rounded-full bg-[#0fc45e]"></span>
    <span class="ml-[18px] flex-1">已连接</span><span>展开</span>
  </div>
</section>

</body>
</html>
